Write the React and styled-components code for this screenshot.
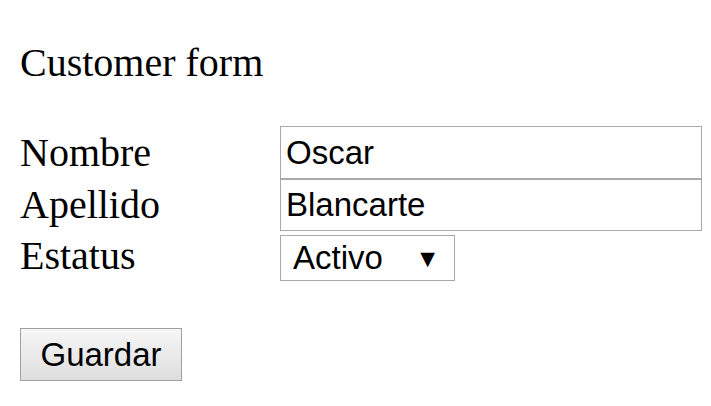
import { createGlobalStyle } from "styled-components";
import styled from "styled-components";

const GlobalStyle = createGlobalStyle`
  body {
    margin: 20px 0 20px 20px;
    background: #ffffff;
    font-family: "Liberation Serif", "Times New Roman", serif;
    font-size: 40px;
    color: #000000;
  }
`;

const Title = styled.p`
  margin: 20px 0 40px;
  line-height: 46px;
`;

const Form = styled.form`
  display: flex;
  flex-direction: column;
`;

const Row = styled.div`
  display: flex;
  align-items: ${({ top }) => (top ? "flex-start" : "center")};
  height: ${({ h }) => h}px;
`;

const Label = styled.label`
  flex-shrink: 0;
  width: 260px;
  line-height: 46px;
  padding-top: ${({ offset }) => offset || 0}px;
`;

const TextInput = styled.input`
  flex-shrink: 0;
  box-sizing: border-box;
  width: 422px;
  height: ${({ h }) => h}px;
  margin: 0;
  padding: 0 5px;
  border: 1px solid #a9a9a9;
  font-family: "Liberation Sans", Arial, sans-serif;
  font-size: 33px;
  color: #000000;
  outline: none;
`;

const SelectBox = styled.div`
  flex-shrink: 0;
  box-sizing: border-box;
  width: 175px;
  height: 46px;
  margin-top: 4px;
  border: 1px solid #a9a9a9;
  display: flex;
  align-items: center;
  justify-content: space-between;
  padding: 0 14px 0 12px;
  font-family: "Liberation Sans", Arial, sans-serif;
  font-size: 33px;
`;

const Arrow = styled.span`
  font-size: 25px;
  line-height: 1;
`;

const Button = styled.button`
  box-sizing: border-box;
  align-self: flex-start;
  width: 162px;
  height: 53px;
  margin-top: 47px;
  padding: 0;
  border: 1px solid #a0a0a0;
  background: linear-gradient(#f6f6f6, #dedede);
  font-family: "Liberation Sans", Arial, sans-serif;
  font-size: 33px;
  color: #000000;
`;

export default function App() {
  return (
    <>
      <GlobalStyle />
      <Title>Customer form</Title>
      <Form onSubmit={e => e.preventDefault()}>
        <Row h={53}>
          <Label>Nombre</Label>
          <TextInput h={53} defaultValue="Oscar" />
        </Row>
        <Row h={52}>
          <Label>Apellido</Label>
          <TextInput h={52} defaultValue="Blancarte" />
        </Row>
        <Row h={50} top>
          <Label offset={2}>Estatus</Label>
          <SelectBox>
            <span>Activo</span>
            <Arrow>▼</Arrow>
          </SelectBox>
        </Row>
        <Button type="submit">Guardar</Button>
      </Form>
    </>
  );
}
